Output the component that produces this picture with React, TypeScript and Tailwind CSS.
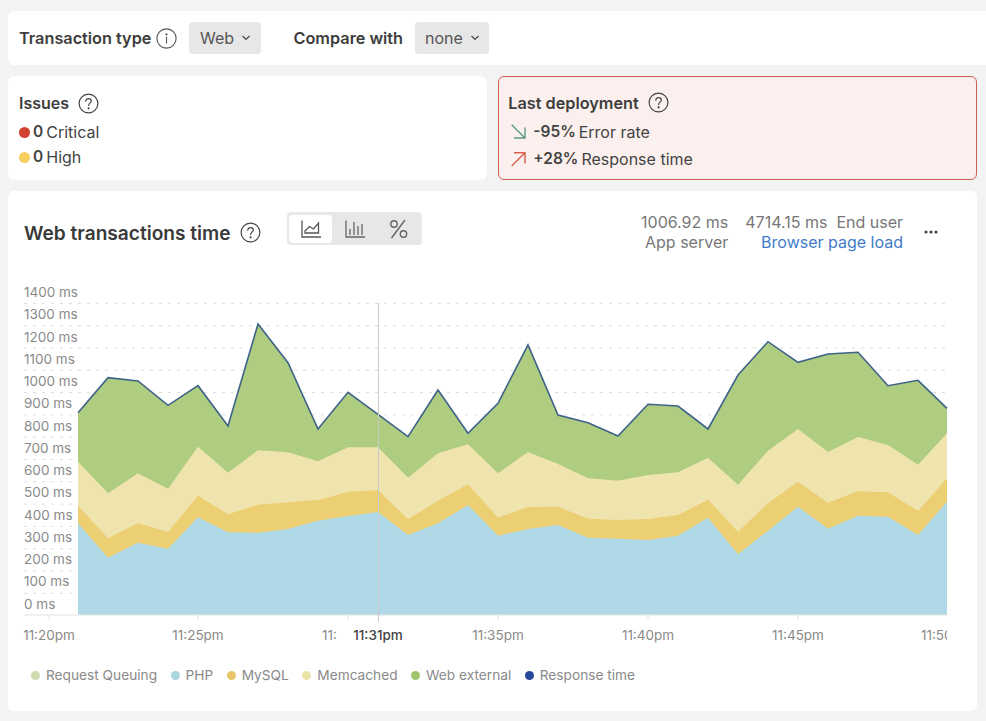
const xs = Array.from({ length: 30 }, (_, i) => (i === 29 ? 947 : 78 + i * 30));

const topLine = [412.7, 377.7, 381, 405.3, 385.7, 426, 324, 362.7, 429, 392.3, 414.3, 436.7, 390, 433.3, 403.3, 345, 415, 422.7, 436, 404.3, 406, 429, 375, 341.7, 362.3, 354, 352.3, 385.7, 380.3, 408.3];
const webBottom = [461.7, 493.3, 473.3, 488.7, 446.7, 472.7, 450.3, 452.3, 461.3, 447.3, 447.3, 477.7, 453.3, 444.3, 473.3, 452, 464, 478.3, 480.7, 475, 472.3, 457.7, 484.7, 450.7, 429, 452, 437, 445, 464.7, 433.3];
const memBottom = [505.7, 538.3, 523.3, 532, 495.7, 514.3, 504.7, 502.3, 500, 492, 490, 519.3, 500.7, 484.3, 517.7, 507, 506.7, 518.7, 520, 519, 515, 499.7, 531.7, 503.3, 481.7, 502.7, 491.3, 492.3, 511, 478.3];
const phpTop = [523.3, 557.7, 542.7, 548.7, 517.3, 532.3, 532.7, 529, 520.7, 516, 512, 535, 523.3, 505, 535.7, 529, 525, 537.7, 538.7, 540, 535.7, 517.7, 554.3, 530.7, 506.7, 528.7, 515.7, 516.7, 535, 501.7];

const baseline = 615;

const line = (ys: number[]) => ys.map((y, i) => `${xs[i]},${y}`).join(' ');
const area = (ys: number[]) => `78,${baseline} ${line(ys)} 947,${baseline}`;

const yLabels = [1400, 1300, 1200, 1100, 1000, 900, 800, 700, 600, 500, 400, 300, 200, 100, 0];
const xLabels = [
  { x: 49, label: '11:20pm' },
  { x: 198, label: '11:25pm' },
  { x: 498, label: '11:35pm' },
  { x: 648, label: '11:40pm' },
  { x: 798, label: '11:45pm' },
];
const ticks = [49, 198, 348, 498, 648, 798];

const legend = [
  { name: 'Request Queuing', color: 'bg-[#cfdcb0]' },
  { name: 'PHP', color: 'bg-[#a9d6df]' },
  { name: 'MySQL', color: 'bg-[#e6c468]' },
  { name: 'Memcached', color: 'bg-[#e8e4a8]' },
  { name: 'Web external', color: 'bg-[#a2c46f]' },
  { name: 'Response time', color: 'bg-[#27479b]' },
];

function HelpIcon() {
  return (
    <svg width="21" height="21" viewBox="0 0 21 21" fill="none" stroke="#444" strokeWidth="1.2" strokeLinecap="round">
      <circle cx="10.5" cy="10.5" r="9.4" />
      <path d="M7.8 8.2c0-1.6 1.2-2.6 2.8-2.6s2.7 1 2.7 2.4c0 2-2.7 2.2-2.7 4.4" />
      <circle cx="10.6" cy="15.3" r="0.5" fill="#444" />
    </svg>
  );
}

function InfoIcon() {
  return (
    <svg width="21" height="21" viewBox="0 0 21 21" fill="none" stroke="#555" strokeWidth="1.1" strokeLinecap="round">
      <circle cx="10.5" cy="10.5" r="9.6" />
      <path d="M10.5 9.4v5.6" />
      <circle cx="10.5" cy="6.4" r="0.5" fill="#555" />
    </svg>
  );
}

function Chevron() {
  return (
    <svg width="8" height="6" viewBox="0 0 8 6" fill="none" stroke="#444" strokeWidth="1.2" strokeLinecap="round" strokeLinejoin="round">
      <path d="M0.8 1.3 4 4.4l3.2-3.1" />
    </svg>
  );
}

function Dropdown({ label }: { label: string }) {
  return (
    <div className="flex h-8 items-center gap-2 rounded bg-[#e7e7e7] px-[10.5px] text-[16px] text-[#555]">
      {label}
      <Chevron />
    </div>
  );
}

function Dot({ color }: { color: string }) {
  return <span className={`h-[11px] w-[11px] rounded-full ${color}`} />;
}

export default function App() {
  return (
    <div className="h-[721px] w-[986px] overflow-hidden bg-[#f3f3f3] pt-[11px] pl-2 font-['Inter',sans-serif] text-[#444]">
      <div className="-mr-2 flex h-[54px] items-center rounded-l-md bg-white pl-[11px]">
        <span className="text-[16.25px] font-semibold text-[#3d3d3d]">Transaction type</span>
        <span className="ml-[5px] flex"><InfoIcon /></span>
        <span className="ml-3"><Dropdown label="Web" /></span>
        <span className="ml-[33px] text-[16.25px] font-semibold text-[#3d3d3d]">Compare with</span>
        <span className="ml-[11.5px]"><Dropdown label="none" /></span>
      </div>

      <div className="mt-[11px] flex w-[969px] gap-[11px]">
        <div className="h-[104px] flex-1 rounded-md bg-white pt-[15px] pl-[11px]">
          <div className="flex items-center gap-[9px] text-[16px] font-semibold text-[#3d3d3d]">
            Issues <HelpIcon />
          </div>
          <div className="mt-[5px] flex items-center gap-[3px] text-[16px]">
            <Dot color="bg-[#d2402f]" />
            <span className="text-[15.5px] font-semibold">0</span> Critical
          </div>
          <div className="mt-[1px] flex items-center gap-[3px] text-[16px]">
            <Dot color="bg-[#f6cf5c]" />
            <span className="text-[15.5px] font-semibold">0</span> High
          </div>
        </div>
        <div className="h-[104px] flex-1 rounded-md border-[1.5px] border-[#cf5f52] bg-[#fbf0ee] pt-[13.5px] pl-[9.5px]">
          <div className="flex items-center gap-[9px] text-[16.25px] font-semibold text-[#3d3d3d]">
            Last deployment <HelpIcon />
          </div>
          <div className="mt-[5px] flex items-center text-[16px]">
            <svg width="16" height="16" viewBox="0 0 16 16" fill="none" stroke="#5b9a80" strokeWidth="1.4" className="ml-[3px]">
              <path d="M0.7 0.7 14 14M14 3.5V14H3" />
            </svg>
            <span className="ml-[6px] text-[15.5px] font-semibold">-95%</span>
            <span className="ml-[3px]">Error rate</span>
          </div>
          <div className="mt-[3px] flex items-center text-[16px]">
            <svg width="16" height="16" viewBox="0 0 16 16" fill="none" stroke="#d9604f" strokeWidth="1.4" className="ml-[3px]">
              <path d="M0.7 15 14 1.7M3 1.7h11V12.5" />
            </svg>
            <span className="ml-[6px] text-[15.5px] font-semibold">+28%</span>
            <span className="ml-[3px]">Response time</span>
          </div>
        </div>
      </div>

      <div className="mt-[11px] h-[520px] w-[969px] rounded-md bg-white">
        <div className="flex h-[89px] items-start pt-[21px] pl-4">
          <div className="mt-[6.5px] flex items-center gap-[10px]">
            <span className="text-[19.1px] font-semibold text-[#3a3a3a]">Web transactions time</span>
            <HelpIcon />
          </div>
          <div className="ml-[26px] flex h-[33px] w-[135px] rounded bg-[#e7e7e7] px-[2px] pt-[3px] pb-[2px]">
            <div className="flex w-[43px] items-center justify-center rounded bg-white">
              <svg width="20" height="18" viewBox="0 0 20 18" fill="none" stroke="#555" strokeWidth="1.3">
                <path d="M1 0.5V17H20" />
                <path d="M4 13V11L8.5 6.5 12.5 9 17.5 3V13Z" />
              </svg>
            </div>
            <div className="flex w-[45px] items-center justify-center">
              <svg width="20" height="18" viewBox="0 0 20 18" fill="none" stroke="#666" strokeWidth="1.3">
                <path d="M1 0.5V17H20M5 15V9M9 15V2M13 15V6M17 15V4" />
              </svg>
            </div>
            <div className="flex w-[43px] items-center justify-center">
              <svg width="20" height="20" viewBox="0 0 20 20" fill="none" stroke="#666" strokeWidth="1.4">
                <path d="M16 1 2.5 19" />
                <circle cx="5" cy="5" r="3.2" />
                <circle cx="14.5" cy="15" r="3.2" />
              </svg>
            </div>
          </div>
          <div className="ml-auto flex text-[16px] leading-[20px] text-[#777]">
            <div className="text-right">
              <div>1006.92 ms</div>
              <div>App server</div>
            </div>
            <div className="ml-[17px] text-right">
              <div className="flex gap-[9px]">
                <span>4714.15 ms</span>
                <span>End user</span>
              </div>
              <div className="text-[#3f7cc9]">Browser page load</div>
            </div>
            <svg width="14" height="4" viewBox="0 0 14 4" fill="#444" className="mt-[18px] mr-[39px] ml-[21px]">
              <circle cx="2" cy="2" r="1.6" />
              <circle cx="7" cy="2" r="1.6" />
              <circle cx="12" cy="2" r="1.6" />
            </svg>
          </div>
        </div>

        <svg width="969" height="370" viewBox="8 280 969 370" className="block font-['Inter',sans-serif]">
          {yLabels.slice(1).map((_, i) => {
            const y = 303.3 + i * 22.31;
            return <line key={i} x1="24" x2="947" y1={y} y2={y} stroke="#dcdcdc" strokeDasharray="3 6" />;
          })}
          <polygon points={area(topLine)} fill="#aecd81" />
          <polygon points={area(webBottom)} fill="#f0e4ae" />
          <polygon points={area(memBottom)} fill="#ecce73" />
          <polygon points={area(phpTop)} fill="#b0d9e7" />
          <polyline points={line(topLine)} fill="none" stroke="#3f6388" strokeWidth="1.6" />
          <line x1="24" x2="947" y1="615" y2="615" stroke="#e3e3e3" />
          {ticks.map((x) => (
            <line key={x} x1={x} x2={x} y1="615" y2="620" stroke="#e3e3e3" />
          ))}
          <line x1="378.5" x2="378.5" y1="303" y2="622" stroke="#c9c9c9" />
          {yLabels.map((v, i) => (
            <text key={v} x="24" y={297 + i * 22.25} fontSize="13.5" fill="#8a8a8a">
              {v} ms
            </text>
          ))}
          {xLabels.map((t) => (
            <text key={t.label} x={t.x} y="639.5" textAnchor="middle" fontSize="13.5" fill="#8a8a8a">
              {t.label}
            </text>
          ))}
          <text x="322" y="639.5" fontSize="13.5" fill="#8a8a8a">11:</text>
          <text x="378" y="639.5" textAnchor="middle" fontSize="13.5" fontWeight="500" fill="#444">11:31pm</text>
          <text x="921" y="639.5" fontSize="13.5" fill="#8a8a8a" clipPath="url(#edge)">11:50pm</text>
          <clipPath id="edge">
            <rect x="900" y="620" width="47" height="30" />
          </clipPath>
        </svg>

        <div className="mt-[15px] flex items-center pl-[23px] text-[13.7px] text-[#8a8a8a]">
          {legend.map((l) => (
            <div key={l.name} className="mr-[13.5px] flex items-center gap-[6px]">
              <span className={`h-[9px] w-[9px] rounded-full ${l.color}`} />
              {l.name}
            </div>
          ))}
        </div>
      </div>
    </div>
  );
}
